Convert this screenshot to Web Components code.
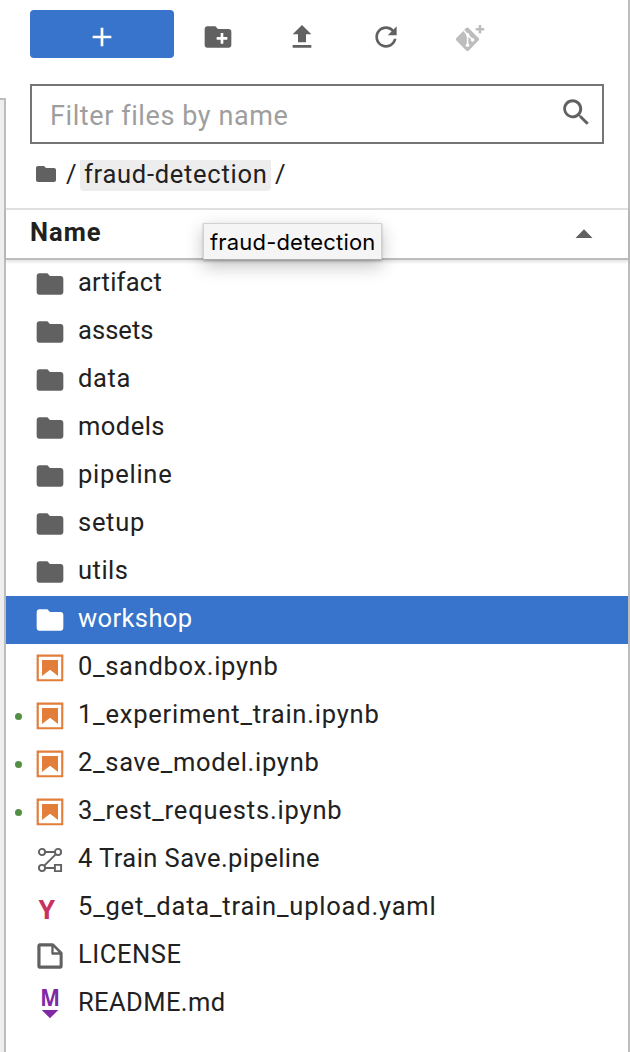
<!DOCTYPE html>
<html lang="en"><head><meta charset="utf-8"><title>File Browser</title>
<style>html,body{margin:0;height:100%;background:#fff}body{overflow:hidden;font-family:Roboto,"Noto Sans",sans-serif;color:#212121}</style></head>
<body><file-browser></file-browser>
<script>
const ICONS={
folder:['24','<path fill="currentColor" d="M10 4H4c-1.1 0-1.99.9-1.99 2L2 18c0 1.1.9 2 2 2h16c1.1 0 2-.9 2-2V8c0-1.1-.9-2-2-2h-8l-2-2z"/>'],
newfolder:['24','<path fill="currentColor" d="M20 6h-8l-2-2H4c-1.11 0-1.99.89-1.99 2L2 18c0 1.11.89 2 2 2h16c1.11 0 2-.89 2-2V8c0-1.11-.89-2-2-2zm-1 8h-3v3h-2v-3h-3v-2h3V9h2v3h3v2z"/>'],
upload:['24','<path fill="currentColor" d="M5 20h14v-2H5zM5 10h4v6h6v-6h4l-7-7z"/>'],
add:['24','<path fill="currentColor" d="M19 13h-6v6h-2v-6H5v-2h6V5h2v6h6z"/>'],
refresh:['18','<path fill="currentColor" d="M9 13.5c-2.49 0-4.5-2.01-4.5-4.5S6.51 4.5 9 4.5c1.24 0 2.36.52 3.17 1.33L10 8h5V3l-1.76 1.76C12.15 3.68 10.66 3 9 3 5.69 3 3.01 5.69 3.01 9S5.69 15 9 15c2.97 0 5.43-2.16 5.9-5h-1.52c-.46 2-2.24 3.5-4.38 3.5z"/>'],
search:['18','<path fill="currentColor" d="M12.1 10.9h-.7l-.2-.2c.8-.9 1.3-2.2 1.3-3.5 0-3-2.4-5.4-5.4-5.4S1.8 4.2 1.8 7.1s2.4 5.4 5.4 5.4c1.3 0 2.5-.5 3.5-1.3l.2.2v.7l4.1 4.1 1.2-1.2-4.2-4.1zm-5 0c-2.1 0-3.7-1.7-3.7-3.7s1.7-3.7 3.7-3.7 3.7 1.7 3.7 3.7-1.6 3.7-3.7 3.7z"/>'],
git:['32','<g transform="translate(-2 .6)"><path fill="#bdbdbd" d="M12.3 8.1l1.5-1.5q1.700-1.400 3 0L26.500 16.400q1.300 1.300 0 2.600L16.800 28.800q-1.300 1.300-2.600 0L4.400 19q-1.300-1.300 0-2.600L12.300 8.500z"/><path fill="none" stroke="#fff" stroke-width="1.500" d="M11.600 8.700l4 4.600v10.500M15.700 13.300l5 5"/><circle fill="#fff" cx="15.600" cy="13.300" r="1.800"/><circle fill="#fff" cx="15.600" cy="23.600" r="1.800"/><circle fill="#fff" cx="20.600" cy="18.300" r="1.800"/><path fill="#bdbdbd" d="M26.700 3.400h2.500v3.100h3v2.400h-3V12h-2.500V8.900h-3V6.500h3z"/></g>'],
caret:['32','<path fill="currentColor" d="M7.500 20h17L16 11.300z"/>'],
notebook:['22','<path fill="#e27d3a" d="M18.700 3.300v15.400H3.300V3.300h15.400m1.500-1.500H1.800v18.300h18.300l.1-18.300z"/><path fill="#e27d3a" d="M16.500 16.500l-5.400-4.300-5.600 4.300v-11h11z"/>'],
pipeline:['32','<g fill="none" stroke="currentColor" stroke-width="1.900"><path d="M11 8h10M21.700 10.300L10.300 21.700M11 24h9"/><circle cx="8" cy="8" r="3.100"/><circle cx="24" cy="8" r="3.100"/><circle cx="8" cy="24" r="3.100"/><path d="M20.900 20.900h6.200v6.200h-6.200z"/></g>'],
yaml:['32','<text x="12.800" y="27.200" text-anchor="middle" font-family="Noto Sans,sans-serif" font-weight="700" font-size="26.500" fill="#c9315f">Y</text>'],
file:['22','<path fill="currentColor" d="M19.300 8.200l-5.500-5.500c-.3-.3-.7-.5-1.200-.5H3.900c-.8.1-1.600.9-1.600 1.800v14.100c0 .9.700 1.600 1.600 1.600h14.200c.9 0 1.600-.7 1.600-1.600V9.400c.1-.5-.1-.9-.4-1.200zm-5.800-3.300l3.400 3.600h-3.400V4.900zm3.900 12.700H4.700c-.1 0-.2 0-.2-.2V4.700c0-.2.1-.3.2-.3h7.200v4.400s0 .8.300 1.100c.3.300 1.100.3 1.100.3h4.300v7.200s-.1.200-.2.200z"/>'],
markdown:['32','<text transform="translate(16 17.800) scale(.93 1)" text-anchor="middle" font-family="Noto Sans,sans-serif" font-weight="700" font-size="22.500" fill="#8029a5">M</text><path fill="#8029a5" d="M7.700 22h16.600L16 30.200z"/>']
};
class JpIcon extends HTMLElement{connectedCallback(){const [v,p]=ICONS[this.getAttribute('name')];const s=this.getAttribute('size')||32;
this.attachShadow({mode:'open'}).innerHTML=`<style>:host{display:block;flex:none;width:${s}px;height:${s}px}svg{display:block;width:100%;height:100%;overflow:visible}</style><svg viewBox="0 0 ${v} ${v}">${p}</svg>`}}
customElements.define('jp-icon',JpIcon);
/* A single line label whose tracking is spread so that it fills its "fit" width. */
class FitLabel extends HTMLElement{connectedCallback(){const t=this.getAttribute('text');
this.attachShadow({mode:'open'}).innerHTML=`<style>:host{display:block;flex:none;white-space:nowrap}span{display:inline-block;font-variant-ligatures:none}</style><span></span>`;
const s=this.shadowRoot.querySelector('span');s.textContent=t;const w=+this.getAttribute('fit');
if(w)s.style.letterSpacing=((w-s.getBoundingClientRect().width)/t.length)+'px'}}
customElements.define('fit-label',FitLabel);
class FileRow extends HTMLElement{connectedCallback(){const a=n=>this.getAttribute(n);
this.attachShadow({mode:'open'}).innerHTML=`<style>:host{display:flex;align-items:center;height:48px;box-sizing:border-box;color:#616161}
.dot{flex:none;width:7px;height:7px;border-radius:50%;margin:1px 12px 0 9px}:host([running]) .dot{background:#558f47}
fit-label{margin-left:12px;font-size:25.500px;line-height:40px;padding-bottom:5px;color:#212121}
:host([selected]){background:#3874cb;color:#fff}:host([selected]) fit-label{color:#fff}</style>
<i class="dot"></i><jp-icon name="${a('icon')}"></jp-icon><fit-label text="${a('name')}" fit="${a('fit')}"></fit-label>`}}
customElements.define('file-row',FileRow);
class FileToolbar extends HTMLElement{connectedCallback(){this.attachShadow({mode:'open'}).innerHTML=`<style>:host{display:flex;height:48px;align-items:center;padding:10px 0 0 24px;color:#616161}
.new{display:flex;align-items:center;justify-content:center;width:144px;height:48px;border-radius:4px;background:#3874cb;color:#fff;margin-right:28px;padding-top:6px;box-sizing:border-box}
.i{display:flex;gap:52px;margin-top:6px}</style>
<div class="new"><jp-icon name="add"></jp-icon></div><div class="i"><jp-icon name="newfolder"></jp-icon><jp-icon name="upload"></jp-icon><jp-icon name="refresh"></jp-icon><jp-icon name="git"></jp-icon></div>`}}
customElements.define('file-toolbar',FileToolbar);
class FileFilter extends HTMLElement{connectedCallback(){this.attachShadow({mode:'open'}).innerHTML=`<style>:host{display:flex;justify-content:space-between;box-sizing:border-box;margin:26px 24px 0;height:60px;border:2px solid #757575;padding:9px 10px 0 18px;color:#616161}
fit-label{font-size:27px;line-height:42px;color:#9e9e9e}jp-icon{margin-top:1px}</style><fit-label text="Filter files by name" fit="238.500"></fit-label><jp-icon name="search"></jp-icon>`}}
customElements.define('file-filter',FileFilter);
class BreadCrumbs extends HTMLElement{connectedCallback(){this.attachShadow({mode:'open'}).innerHTML=`<style>:host{display:flex;align-items:flex-start;height:48px;padding:16px 0 0 28px;font-size:25.500px;line-height:29px;color:#212121;box-sizing:content-box}
jp-icon{color:#616161;margin:2px 8px 0 0}.c{background:#ededed;width:191px;height:31px;border-radius:0 0 4px 4px;box-sizing:border-box;padding-left:4px;margin:0 4px 0 5px}</style>
<jp-icon name="folder" size="24"></jp-icon><fit-label text="/" fit="9"></fit-label><div class="c"><fit-label text="fraud-detection" fit="183.500"></fit-label></div><fit-label text="/" fit="9"></fit-label>`}}
customElements.define('bread-crumbs',BreadCrumbs);
class ListHeader extends HTMLElement{connectedCallback(){this.attachShadow({mode:'open'}).innerHTML=`<style>:host{display:flex;position:relative;z-index:1;justify-content:space-between;box-sizing:border-box;height:52px;border-top:2px solid #e0e0e0;border-bottom:2px solid #bdbdbd;box-shadow:0 2px 3px #0000001f;padding:0 28px 0 24px;color:#616161}
.n{font-size:25.500px;font-weight:700;line-height:44px;color:#212121}jp-icon{margin-top:8px}
.tip{position:absolute;left:197px;top:13px;width:179px;height:37px;box-sizing:border-box;border:1px solid #d2d2d2;border-bottom-color:#aaa;background:#f5f5f5;box-shadow:0 6px 18px #0000003d,0 1px 2px #00000038;color:#000;font:22px/37px Inter,sans-serif;padding-left:6px}</style>
<fit-label class="n" text="Name" fit="71.500"></fit-label><jp-icon name="caret"></jp-icon><div class="tip"><fit-label text="fraud-detection" fit="165.500"></fit-label></div>`}}
customElements.define('list-header',ListHeader);
const FILES=[['folder','artifact',84],['folder','assets',75.500],['folder','data',53],['folder','models',87],['folder','pipeline',94.500],['folder','setup',67],['folder','utils',50.500],['folder','workshop',114.500,'selected'],['notebook','0_sandbox.ipynb',200.500],['notebook','1_experiment_train.ipynb',301.500,'running'],['notebook','2_save_model.ipynb',241.500,'running'],['notebook','3_rest_requests.ipynb',264.500,'running'],['pipeline','4 Train Save.pipeline',242],['yaml','5_get_data_train_upload.yaml',358.500],['file','LICENSE',103.500],['markdown','README.md',147.500]];
class FileBrowser extends HTMLElement{connectedCallback(){this.attachShadow({mode:'open'}).innerHTML=`<style>:host{display:flex;height:1052px;width:630px}
.rail{width:6px;flex:none;box-sizing:border-box;margin-top:98px;background:#eee;border-right:2px solid #bdbdbd;border-top:2px solid #bdbdbd}
main{width:624px;box-sizing:border-box;border-right:2px solid #bdbdbd;background:#fff}</style>
<div class="rail"></div><main><file-toolbar></file-toolbar><file-filter></file-filter><bread-crumbs></bread-crumbs><list-header></list-header>
${FILES.map(([i,n,w,s])=>`<file-row icon="${i}" name="${n}" fit="${w}" ${s||''}></file-row>`).join('')}</main>`}}
customElements.define('file-browser',FileBrowser);
</script></body></html>
